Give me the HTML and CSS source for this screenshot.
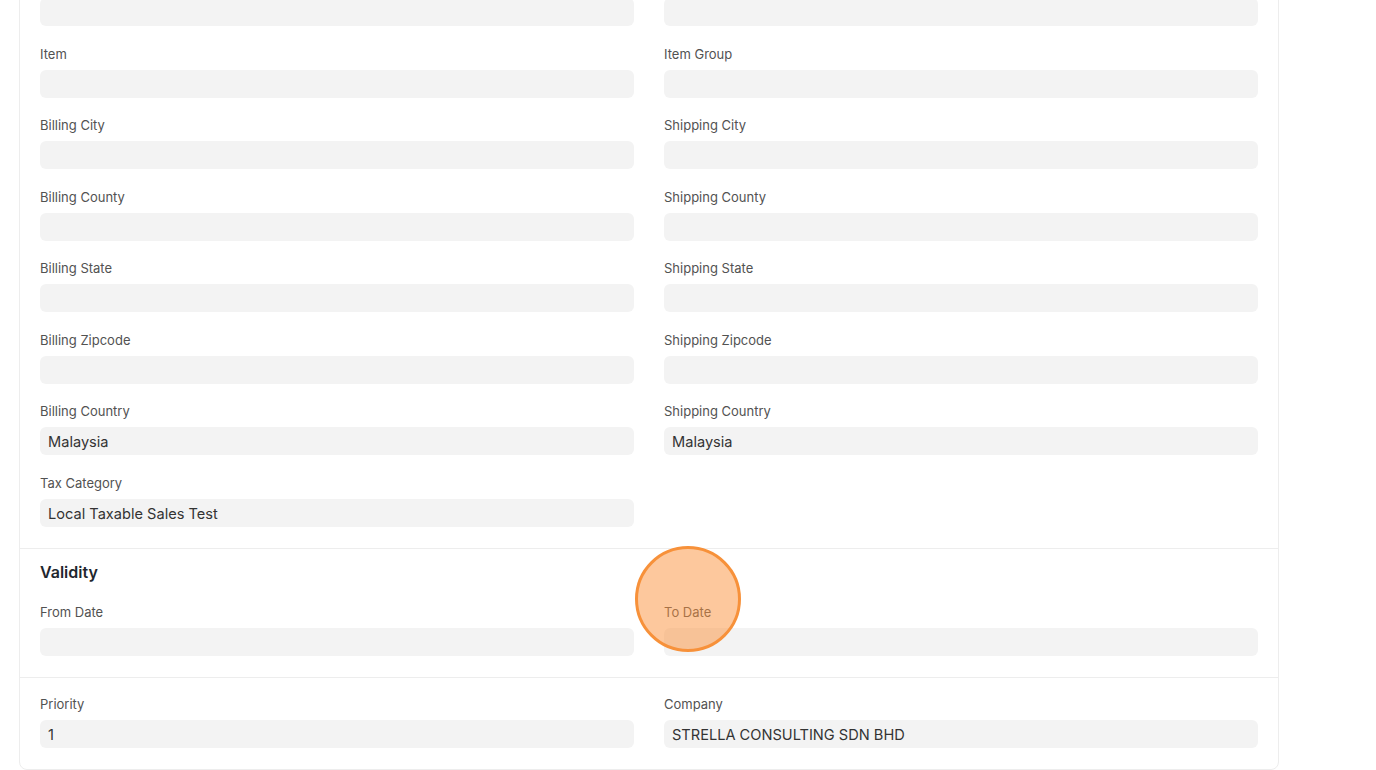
FILE: index.html
```html
<!DOCTYPE html>
<html lang="en">
<head>
  <meta charset="UTF-8">
  <meta name="viewport" content="width=device-width, initial-scale=1.0">
  <title>Tax Rule</title>
  <link rel="stylesheet" href="styles.css">
</head>
<body>
  <div class="page">
    <div class="form-card">

      <div class="section">
        <div class="columns">
          <div class="column">
            <div class="field">
              <label>Customer Group</label>
              <div class="input"></div>
            </div>
            <div class="field">
              <label>Item</label>
              <div class="input"></div>
            </div>
            <div class="field">
              <label>Billing City</label>
              <div class="input"></div>
            </div>
            <div class="field">
              <label>Billing County</label>
              <div class="input"></div>
            </div>
            <div class="field">
              <label>Billing State</label>
              <div class="input"></div>
            </div>
            <div class="field">
              <label>Billing Zipcode</label>
              <div class="input"></div>
            </div>
            <div class="field">
              <label>Billing Country</label>
              <div class="input">Malaysia</div>
            </div>
            <div class="field">
              <label>Tax Category</label>
              <div class="input">Local Taxable Sales Test</div>
            </div>
          </div>
          <div class="column">
            <div class="field">
              <label>Supplier Group</label>
              <div class="input"></div>
            </div>
            <div class="field">
              <label>Item Group</label>
              <div class="input"></div>
            </div>
            <div class="field">
              <label>Shipping City</label>
              <div class="input"></div>
            </div>
            <div class="field">
              <label>Shipping County</label>
              <div class="input"></div>
            </div>
            <div class="field">
              <label>Shipping State</label>
              <div class="input"></div>
            </div>
            <div class="field">
              <label>Shipping Zipcode</label>
              <div class="input"></div>
            </div>
            <div class="field">
              <label>Shipping Country</label>
              <div class="input">Malaysia</div>
            </div>
          </div>
        </div>
      </div>

      <div class="section section-validity">
        <h3 class="section-title">Validity</h3>
        <div class="columns">
          <div class="column">
            <div class="field">
              <label>From Date</label>
              <div class="input"></div>
            </div>
          </div>
          <div class="column">
            <div class="field highlighted">
              <label>To Date</label>
              <div class="input"></div>
              <span class="click-marker"></span>
            </div>
          </div>
        </div>
      </div>

      <div class="section section-last">
        <div class="columns">
          <div class="column">
            <div class="field">
              <label>Priority</label>
              <div class="input">1</div>
            </div>
          </div>
          <div class="column">
            <div class="field">
              <label>Company</label>
              <div class="input">STRELLA CONSULTING SDN BHD</div>
            </div>
          </div>
        </div>
      </div>

    </div>
  </div>
</body>
</html>
```

FILE: styles.css
```css
body {
  margin: 0;
  background: #fff;
  font-family: Inter, "Noto Sans", sans-serif;
  color: #1f272e;
  overflow: hidden;
}

/* page is scrolled, so the top of the card sits above the window */
.page {
  padding-left: 19px;
  margin-top: -46px;
}

.form-card {
  width: 1260px;
  box-sizing: border-box;
  border: 1px solid #ededed;
  border-radius: 8px;
  background: #fff;
}

.section {
  padding: 20px 20px 21px 20px;
  border-bottom: 1px solid #ededed;
}

.section-validity {
  padding-top: 13px;
}

.section-last {
  padding-top: 19px;
  border-bottom: none;
}

.section-title {
  margin: 0 0 23px 0;
  font-size: 16px;
  line-height: 20px;
  font-weight: 600;
  color: #1f272e;
}

.columns {
  display: grid;
  grid-template-columns: 1fr 1fr;
  column-gap: 30px;
}

.column {
  display: flex;
  flex-direction: column;
  gap: 20.5px;
}

.field {
  display: flex;
  flex-direction: column;
}

.field label {
  font-size: 13px;
  line-height: 14px;
  color: #525252;
  margin-bottom: 9px;
}

.input {
  height: 28px;
  line-height: 30px;
  padding: 0 8px;
  border-radius: 6px;
  background: #f3f3f3;
  font-size: 14.6px;
  color: #333;
  overflow: hidden;
}

.highlighted {
  position: relative;
}

.click-marker {
  position: absolute;
  left: -29px;
  top: -59px;
  width: 100px;
  height: 100px;
  border-radius: 50%;
  border: 3px solid #f7913a;
  background: rgba(251, 146, 60, 0.5);
}
```
